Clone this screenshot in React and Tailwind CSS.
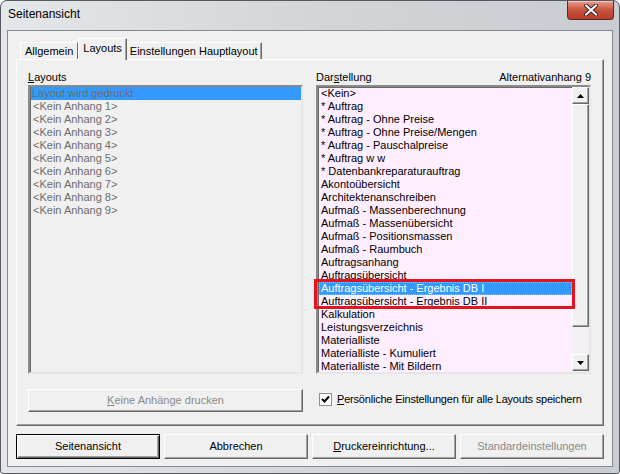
const leftItems = [
  "<Kein Anhang 1>",
  "<Kein Anhang 2>",
  "<Kein Anhang 3>",
  "<Kein Anhang 4>",
  "<Kein Anhang 5>",
  "<Kein Anhang 6>",
  "<Kein Anhang 7>",
  "<Kein Anhang 8>",
  "<Kein Anhang 9>",
];

const rightItems = [
  "<Kein>",
  "* Auftrag",
  "* Auftrag - Ohne Preise",
  "* Auftrag - Ohne Preise/Mengen",
  "* Auftrag - Pauschalpreise",
  "* Auftrag w w",
  "* Datenbankreparaturauftrag",
  "Akontoübersicht",
  "Architektenanschreiben",
  "Aufmaß - Massenberechnung",
  "Aufmaß - Massenübersicht",
  "Aufmaß - Positionsmassen",
  "Aufmaß - Raumbuch",
  "Auftragsanhang",
  "Auftragsübersicht",
  "Auftragsübersicht - Ergebnis DB I",
  "Auftragsübersicht - Ergebnis DB II",
  "Kalkulation",
  "Leistungsverzeichnis",
  "Materialliste",
  "Materialliste - Kumuliert",
  "Materialliste - Mit Bildern",
];

function Arrow({ down }) {
  return (
    <svg width="7" height="4" viewBox="0 0 7 4" className={down ? "rotate-180" : ""}>
      <path d="M3.5 0 L7 4 L0 4 Z" fill="#000" />
    </svg>
  );
}

function ScrollButton({ down }) {
  return (
    <div className="h-[17px] w-[17px] flex items-center justify-center bg-[#f0f0f0] border border-t-white border-l-white border-r-[#696969] border-b-[#696969] shadow-[inset_-1px_-1px_0_#a0a0a0]">
      <Arrow down={down} />
    </div>
  );
}

function Btn({ children, disabled, def, className = "" }) {
  return (
    <div
      className={
        "flex items-center justify-center bg-[#f0f0f0] whitespace-nowrap " +
        (def
          ? "border border-black shadow-[inset_1px_1px_0_#fff,inset_-1px_-1px_0_#696969,inset_-2px_-2px_0_#a0a0a0] "
          : "border border-t-white border-l-white border-r-[#696969] border-b-[#696969] shadow-[inset_-1px_-1px_0_#a0a0a0] ") +
        (disabled ? "text-[#8a8a8a] " : "text-black ") +
        className
      }
    >
      {children}
    </div>
  );
}

export default function App() {
  return (
    <div className="w-[620px] h-[474px] overflow-hidden bg-white font-['Liberation_Sans',Arial,sans-serif] text-[11px] leading-[13px]">
      <div className="w-[620px] h-[474px] rounded-t-[7px] rounded-b-[3px] border border-[#555a60] bg-linear-to-r from-[#e4e6e8] via-[#d3d6d9] to-[#c9ccd0] flex flex-col">
        {/* title bar */}
        <div className="relative h-[29px] shrink-0">
          <div className="pl-[7px] pt-[6px] text-[12px] leading-[15px] text-black">Seitenansicht</div>
          <div className="absolute right-[5px] top-0 w-[47px] h-[19px] rounded-b-[4px] border border-t-0 border-[#5a2a2a] bg-linear-to-b from-[#e6a08f] via-[#c8533f] to-[#b93c2a] flex items-center justify-center shadow-[inset_0_1px_0_#f4c8bc]">
            <svg width="14" height="12" viewBox="0 0 14 12">
              <path d="M2 1.5 L12 10.5 M12 1.5 L2 10.5" stroke="#3b2020" strokeWidth="4" strokeLinecap="round" />
              <path d="M2 1.5 L12 10.5 M12 1.5 L2 10.5" stroke="#fff" strokeWidth="2.2" strokeLinecap="round" />
            </svg>
          </div>
        </div>

        {/* client area */}
        <div className="mx-[6px] h-[437px] border border-[#858b92] bg-[#f0f0f0] px-[8px] flex flex-col">
          {/* tabs */}
          <div className="h-[28px] flex items-end pl-[4px] shrink-0 whitespace-nowrap">
            <div className="h-[17px] px-[4px] pt-[2px] border-t border-l border-white border-r border-r-[#696969]">Allgemein</div>
            <div className="relative z-10 -mb-px h-[22px] px-[4px] pt-[3px] bg-[#f0f0f0] border-t border-l border-white border-r border-r-[#696969] shadow-[inset_-1px_0_0_#a0a0a0]">Layouts</div>
            <div className="h-[17px] px-[3px] pt-[2px] border-t border-white border-r border-r-[#696969] shadow-[inset_-1px_0_0_#a0a0a0]">Einstellungen Hauptlayout</div>
          </div>

          {/* panel */}
          <div className="h-[367px] border border-t-white border-l-white border-r-[#696969] border-b-[#696969] shadow-[inset_-1px_-1px_0_#a0a0a0] pl-[11px] pr-[13px] pt-[11px] shrink-0">
            <div className="grid grid-cols-[275px_275px] gap-x-[13px]">
              {/* left */}
              <div className="flex flex-col">
                <div className="h-[14px]">
                  <span className="underline">L</span>ayouts
                </div>
                <div className="h-[289px] border-2 border-t-[#8a8a8a] border-l-[#8a8a8a] border-r-[#e6e6e6] border-b-[#e6e6e6] shadow-[inset_1px_1px_0_#696969] bg-[#f0f0f0] text-[#6d6d6d]">
                  <div className="h-[13px] bg-[#3399ff] pl-[1px] ml-px">Layout wird gedruckt</div>
                  {leftItems.map((t) => (
                    <div key={t} className="h-[13px] pl-[2px] ml-px">
                      {t}
                    </div>
                  ))}
                </div>
                <Btn disabled className="mt-[15px] h-[23px]">
                  <span>
                    <span className="underline">K</span>eine Anhänge drucken
                  </span>
                </Btn>
              </div>

              {/* right */}
              <div className="flex flex-col">
                <div className="h-[14px] flex justify-between">
                  <span>
                    Dar<span className="underline">s</span>tellung
                  </span>
                  <span>Alternativanhang 9</span>
                </div>
                <div className="relative h-[289px] border-2 border-t-[#8a8a8a] border-l-[#8a8a8a] border-r-[#e6e6e6] border-b-[#e6e6e6] shadow-[inset_1px_1px_0_#696969] bg-[#ffeeff] flex">
                  <div className="flex-1 pl-px">
                    {rightItems.map((t, i) =>
                      i === 15 ? (
                        <div key={t} className="h-[13px] bg-[#3399ff] text-white pl-px border border-dotted border-[#f0b060] leading-[11px]">
                          {t}
                        </div>
                      ) : (
                        <div key={t} className="h-[13px] pl-[2px] text-black">
                          {t}
                        </div>
                      )
                    )}
                  </div>
                  <div className="w-[17px] flex flex-col pb-px bg-[#f4f0f4]">
                    <ScrollButton />
                    <div className="h-[223px] bg-[#f0f0f0] border border-t-white border-l-white border-r-[#696969] border-b-[#696969] shadow-[inset_-1px_-1px_0_#a0a0a0]" />
                    <div className="flex-1" />
                    <ScrollButton down />
                  </div>
                  <div className="absolute left-[-4px] top-[192px] w-[261px] h-[30px] border-[3px] border-[#e5141c]" />
                </div>
                <div className="mt-[18px] flex items-center pl-[3px] h-[15px] whitespace-nowrap">
                  <div className="shrink-0 w-[13px] h-[13px] bg-white border border-[#8e8f8f] flex items-center justify-center">
                    <svg width="9" height="9" viewBox="0 0 9 9">
                      <path d="M1 4 L3.5 6.5 L8 1.5" stroke="#000" strokeWidth="2" fill="none" />
                    </svg>
                  </div>
                  <span className="ml-[5px] tracking-[-0.2px]">
                    <span className="underline">P</span>ersönliche Einstellungen für alle Layouts speichern
                  </span>
                </div>
              </div>
            </div>
          </div>

          {/* bottom buttons */}
          <div className="mt-[8px] grid grid-cols-4 gap-x-[4px]">
            <Btn def className="h-[25px]">Seitenansicht</Btn>
            <Btn className="h-[25px]">Abbrechen</Btn>
            <Btn className="h-[25px]">
              <span>
                <span className="underline">D</span>ruckereinrichtung...
              </span>
            </Btn>
            <Btn disabled className="h-[25px]">Standardeinstellungen</Btn>
          </div>
        </div>
      </div>
    </div>
  );
}
